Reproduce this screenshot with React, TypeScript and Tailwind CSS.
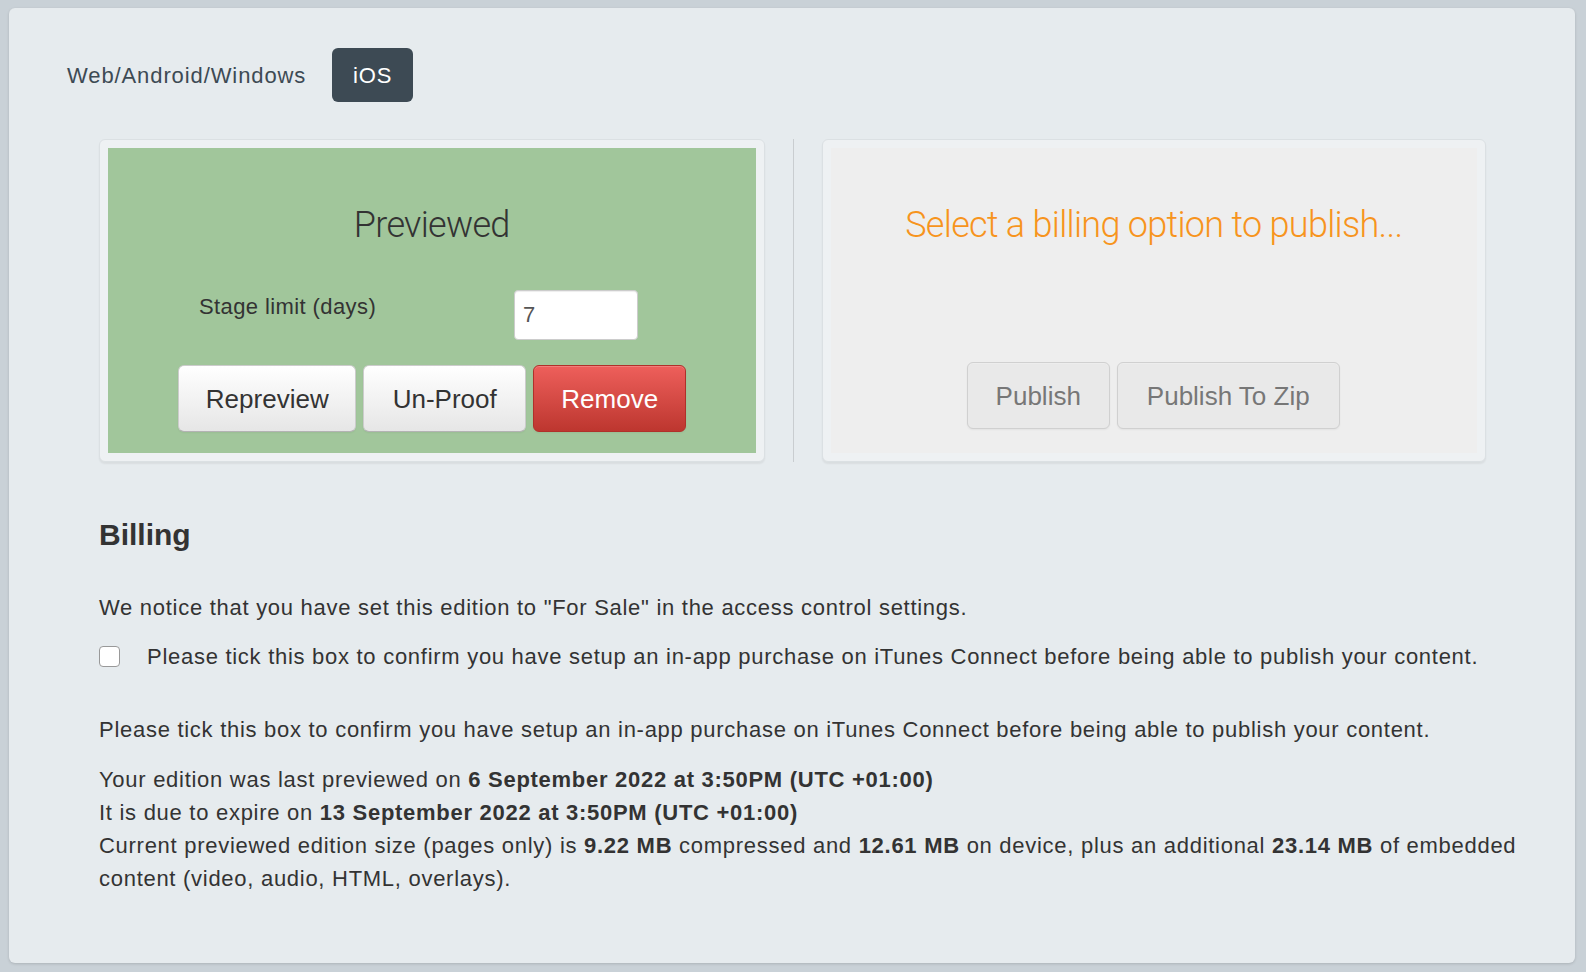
import { useState } from 'react';

const btn =
  'h-[67px] rounded-[6px] border px-[23px] text-[26px] leading-none shadow-[inset_0_1px_0_rgba(255,255,255,0.2),0_1px_2px_rgba(0,0,0,0.05)]';

export default function App() {
  const [tab, setTab] = useState<'web' | 'ios'>('ios');
  const [days, setDays] = useState('7');
  const [confirmed, setConfirmed] = useState(false);

  return (
    <div className="min-h-screen bg-[#c9d1d7] pt-[8px] pl-[9px] pr-[11px] pb-[9px] font-['Liberation_Sans',Arial,sans-serif] text-[#333]">
      <div className="h-[955px] rounded-[6px] bg-[#e6ebee] shadow-[0_1px_3px_rgba(0,0,0,0.15)]">
        {/* platform tabs */}
        <div className="flex items-center gap-[26px] pl-[58px] pt-[40px] text-[22px] tracking-[0.9px]">
          <button
            className={`h-[54px] rounded-[6px] ${tab === 'web' ? 'bg-[#3d4a54] px-[12px] text-white' : 'text-[#3d4a54]'}`}
            onClick={() => setTab('web')}
          >
            Web/Android/Windows
          </button>
          <button
            className={`h-[54px] w-[81px] rounded-[6px] ${tab === 'ios' ? 'bg-[#3d4a54] text-white' : 'text-[#3d4a54]'}`}
            onClick={() => setTab('ios')}
          >
            iOS
          </button>
        </div>

        <div className="pl-[90px] pr-[20px]">
          {/* stage panels */}
          <div className="mt-[37px] flex w-[1387px]">
            <div className="h-[323px] w-[666px] rounded-[6px] border border-[#dbe0e3] bg-[#eef1f3] p-[8px] shadow-[0_2px_2px_rgba(0,0,0,0.06)]">
              <div className="flex h-full flex-col items-center bg-[#a1c69b]">
                <h2 className="mt-[55px] font-['Roboto',sans-serif] text-[36px] leading-[44px] font-light tracking-[-0.7px] text-[#333]">
                  Previewed
                </h2>
                <div className="mt-[43px] flex w-full items-start">
                  <label className="ml-[91px] w-[315px] text-[22px] leading-[33px] tracking-[0.4px] text-[#333]">Stage limit (days)</label>
                  <input
                    value={days}
                    onChange={(e) => setDays(e.target.value)}
                    className="h-[50px] w-[124px] rounded-[4px] border border-[#ccc] bg-white px-[8px] text-[22px] text-[#555] shadow-[inset_0_1px_1px_rgba(0,0,0,0.075)] outline-none"
                  />
                </div>
                <div className="mt-[25px] flex gap-[7px] pl-[1px]">
                  <button className={`${btn} w-[178px] border-[#ccc] border-b-[#b3b3b3] bg-linear-to-b from-white to-[#e6e6e6] text-[#333]`}>
                    Repreview
                  </button>
                  <button className={`${btn} w-[163px] border-[#ccc] border-b-[#b3b3b3] bg-linear-to-b from-white to-[#e6e6e6] text-[#333]`}>
                    Un-Proof
                  </button>
                  <button className={`${btn} w-[153px] border-[#b0302a] bg-linear-to-b from-[#ee5f5b] to-[#bd362f] text-white`}>
                    Remove
                  </button>
                </div>
              </div>
            </div>

            <div className="mx-[28px] h-[323px] w-px bg-[#c9cdd0]" />

            <div className="h-[323px] w-[665px] rounded-[6px] border border-[#dbe0e3] bg-[#eef1f3] p-[8px] shadow-[0_2px_2px_rgba(0,0,0,0.06)]">
              <div className="flex h-full flex-col items-center bg-[#eeeeee]">
                <h2 className="mt-[55px] font-['Roboto',sans-serif] text-[36px] leading-[44px] font-light tracking-[-0.7px] text-[#f7941d]">
                  Select a billing option to publish...
                </h2>
                <div className="mt-[115px] flex gap-[7px] pr-[1px]">
                  <button disabled className={`${btn} w-[143px] border-[#d0d0d0] bg-[#e9e9e9] text-[#777]`}>
                    Publish
                  </button>
                  <button disabled className={`${btn} w-[223px] border-[#d0d0d0] bg-[#e9e9e9] text-[#777]`}>
                    Publish To Zip
                  </button>
                </div>
              </div>
            </div>
          </div>

          {/* billing */}
          <h3 className="mt-[55px] text-[30px] leading-[36px] font-bold text-[#333]">Billing</h3>
          <div className="mt-[38px] text-[22px] leading-[33px] tracking-[0.72px]">
            <p>We notice that you have set this edition to "For Sale" in the access control settings.</p>
            <label className="mt-[16px] flex items-center gap-[27px]">
              <input
                type="checkbox"
                checked={confirmed}
                onChange={(e) => setConfirmed(e.target.checked)}
                className="h-[21px] w-[21px] shrink-0 appearance-none rounded-[4px] border border-[#999] bg-white checked:bg-[#3d4a54]"
              />
              <span>
                Please tick this box to confirm you have setup an in-app purchase on iTunes Connect before being able to publish your content.
              </span>
            </label>
            <p className="mt-[40px]">
              Please tick this box to confirm you have setup an in-app purchase on iTunes Connect before being able to publish your content.
            </p>
            <div className="mt-[17px]">
              <p>
                Your edition was last previewed on <b>6 September 2022 at 3:50PM (UTC +01:00)</b>
              </p>
              <p>
                It is due to expire on <b>13 September 2022 at 3:50PM (UTC +01:00)</b>
              </p>
              <p>
                Current previewed edition size (pages only) is <b>9.22 MB</b> compressed and <b>12.61 MB</b> on device, plus an additional{' '}
                <b>23.14 MB</b> of embedded
                <br />
                content (video, audio, HTML, overlays).
              </p>
            </div>
          </div>
        </div>
      </div>
    </div>
  );
}
